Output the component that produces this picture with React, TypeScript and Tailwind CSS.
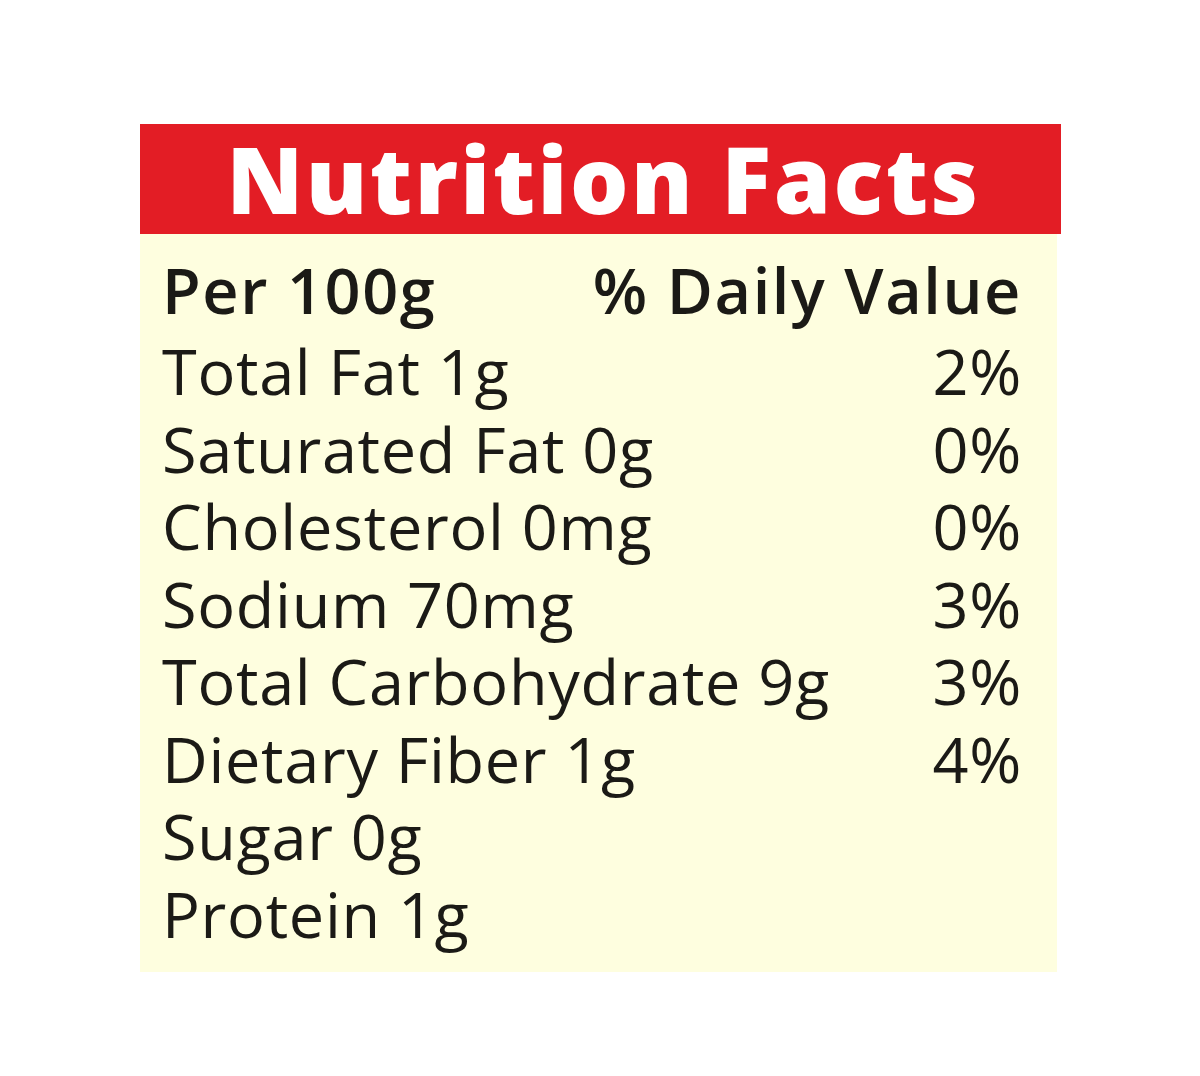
import React from "react";

const rows: [string, string][] = [
  ["Total Fat 1g", "2%"],
  ["Saturated Fat 0g", "0%"],
  ["Cholesterol 0mg", "0%"],
  ["Sodium 70mg", "3%"],
  ["Total Carbohydrate 9g", "3%"],
  ["Dietary Fiber 1g", "4%"],
  ["Sugar 0g", ""],
  ["Protein 1g", ""],
];

export default function App() {
  return (
    <div className="w-[1200px] h-[1076px] bg-white pt-[124px] font-['Open_Sans',sans-serif]">
      <div className="ml-[140px] w-[921px]">
        <div className="h-[110px] bg-[#e31d25] flex items-center justify-center pl-[6px]">
          <span className="text-white font-extrabold text-[92px] leading-none tracking-[2.5px]">
            Nutrition Facts
          </span>
        </div>
        <div className="w-[917px] bg-[#fefedf] pl-[22px] pr-[35px] pt-[17px] pb-[20px] text-[#1b1a16] text-[63px] leading-[77.5px] tracking-[0.7px]">
          <div className="flex justify-between font-semibold leading-[85px] tracking-[1.6px] -mt-[4px]">
            <span>Per 100g</span>
            <span>% Daily Value</span>
          </div>
          {rows.map(([l, r]) => (
            <div key={l} className="flex justify-between">
              <span>{l}</span>
              <span>{r}</span>
            </div>
          ))}
        </div>
      </div>
    </div>
  );
}
